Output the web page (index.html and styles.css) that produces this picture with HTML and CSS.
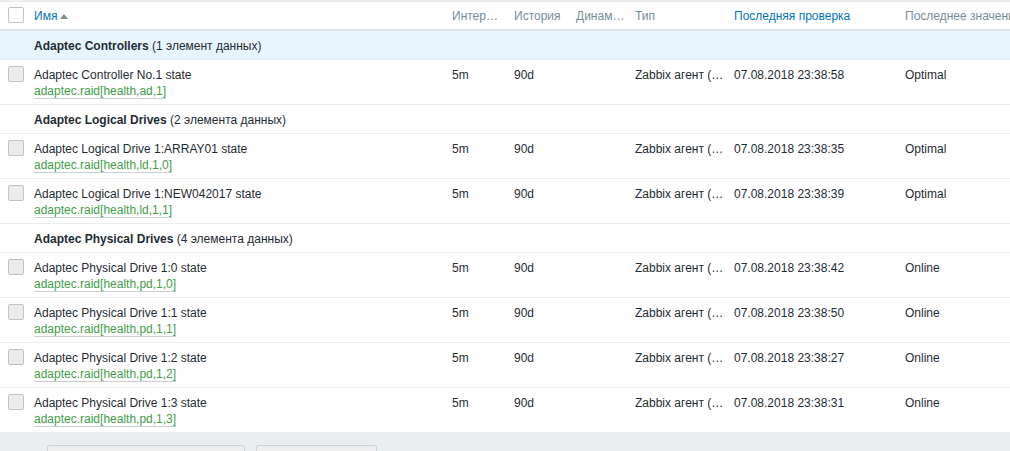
FILE: index.html
```html
<!DOCTYPE html>
<html lang="ru">
<head>
<meta charset="utf-8">
<link rel="stylesheet" href="styles.css">
</head>
<body>
<div class="page">
  <div class="topband"></div>
  <table class="list">
    <colgroup>
      <col class="c-chk"><col class="c-name"><col class="c-int"><col class="c-hist"><col class="c-dyn"><col class="c-type"><col class="c-check"><col class="c-val">
    </colgroup>
    <thead>
      <tr>
        <th class="chk"><span class="cb cb-head"></span></th>
        <th><a class="sort">Имя</a><span class="arrow"></span></th>
        <th>Интер…</th>
        <th>История</th>
        <th>Динам…</th>
        <th>Тип</th>
        <th><a class="sort">Последняя проверка</a></th>
        <th>Последнее значение</th>
      </tr>
    </thead>
    <tbody>
      <tr class="group"><td></td><td colspan="7"><b>Adaptec Controllers</b> (1 элемент данных)</td></tr>
      <tr class="item"><td class="chk"><span class="cb"></span></td><td><div>Adaptec Controller No.1 state</div><span class="key">adaptec.raid[health,ad,1]</span></td><td>5m</td><td>90d</td><td></td><td>Zabbix агент (…</td><td>07.08.2018 23:38:58</td><td>Optimal</td></tr>
      <tr class="group plain"><td></td><td colspan="7"><b>Adaptec Logical Drives</b> (2 элемента данных)</td></tr>
      <tr class="item"><td class="chk"><span class="cb"></span></td><td><div>Adaptec Logical Drive 1:ARRAY01 state</div><span class="key">adaptec.raid[health,ld,1,0]</span></td><td>5m</td><td>90d</td><td></td><td>Zabbix агент (…</td><td>07.08.2018 23:38:35</td><td>Optimal</td></tr>
      <tr class="item"><td class="chk"><span class="cb"></span></td><td><div>Adaptec Logical Drive 1:NEW042017 state</div><span class="key">adaptec.raid[health,ld,1,1]</span></td><td>5m</td><td>90d</td><td></td><td>Zabbix агент (…</td><td>07.08.2018 23:38:39</td><td>Optimal</td></tr>
      <tr class="group plain"><td></td><td colspan="7"><b>Adaptec Physical Drives</b> (4 элемента данных)</td></tr>
      <tr class="item"><td class="chk"><span class="cb"></span></td><td><div>Adaptec Physical Drive 1:0 state</div><span class="key">adaptec.raid[health,pd,1,0]</span></td><td>5m</td><td>90d</td><td></td><td>Zabbix агент (…</td><td>07.08.2018 23:38:42</td><td>Online</td></tr>
      <tr class="item"><td class="chk"><span class="cb"></span></td><td><div>Adaptec Physical Drive 1:1 state</div><span class="key">adaptec.raid[health,pd,1,1]</span></td><td>5m</td><td>90d</td><td></td><td>Zabbix агент (…</td><td>07.08.2018 23:38:50</td><td>Online</td></tr>
      <tr class="item"><td class="chk"><span class="cb"></span></td><td><div>Adaptec Physical Drive 1:2 state</div><span class="key">adaptec.raid[health,pd,1,2]</span></td><td>5m</td><td>90d</td><td></td><td>Zabbix агент (…</td><td>07.08.2018 23:38:27</td><td>Online</td></tr>
      <tr class="item"><td class="chk"><span class="cb"></span></td><td><div>Adaptec Physical Drive 1:3 state</div><span class="key">adaptec.raid[health,pd,1,3]</span></td><td>5m</td><td>90d</td><td></td><td>Zabbix агент (…</td><td>07.08.2018 23:38:31</td><td>Online</td></tr>
    </tbody>
  </table>
  <div class="footer">
    <span class="btn btn-wide"></span>
    <span class="btn btn-narrow"></span>
  </div>
</div>
</body>
</html>
```

FILE: styles.css
```css
html, body {
  margin: 0;
  padding: 0;
  background: #ffffff;
}
body {
  font-family: "Liberation Sans", Arial, sans-serif;
  font-size: 12px;
  color: #1f2c33;
  overflow: hidden;
}
.page {
  width: 1010px;
  overflow: hidden;
}
.topband {
  height: 2px;
  background: #ebeef0;
}
.list {
  border-collapse: collapse;
  table-layout: fixed;
  width: 1060px;
}
.c-chk { width: 29px; }
.c-name { width: 418px; }
.c-int { width: 62px; }
.c-hist { width: 62px; }
.c-dyn { width: 59px; }
.c-type { width: 99px; }
.c-check { width: 171px; }
.c-val { width: 160px; }

th, td {
  text-align: left;
  vertical-align: top;
  padding: 6px 5px;
  line-height: 14px;
  white-space: nowrap;
  overflow: hidden;
}
th {
  font-weight: normal;
  color: #768d99;
  height: 14px;
  padding-top: 7px;
  padding-bottom: 6px;
  border-bottom: 2px solid #dfe4e7;
}
th.chk, td.chk {
  padding-left: 8px;
  padding-right: 0;
}
.sort {
  color: #0275b8;
}
.arrow {
  display: inline-block;
  width: 0;
  height: 0;
  margin-left: 3px;
  border-left: 4px solid transparent;
  border-right: 4px solid transparent;
  border-bottom: 5px solid #768d99;
  vertical-align: 1px;
}
.cb {
  display: block;
  box-sizing: border-box;
  width: 16px;
  height: 16px;
  border: 1px solid #bfc5c7;
  border-radius: 2px;
  background: #ebebeb;
}
.cb-head {
  background: #ffffff;
  margin-top: -2px;
}
.group td {
  background: #e8f5ff;
  padding-top: 8px;
  padding-bottom: 6px;
  border-bottom: 1px solid #ebeef0;
}
.group.plain td {
  background: #ffffff;
}
.item td {
  height: 32px;
  border-bottom: 1px solid #ebeef0;
  padding-top: 8px;
  padding-bottom: 4px;
}
.item td.chk .cb {
  margin-top: -2px;
}
.item td div {
  line-height: 14px;
}
.key {
  display: inline-block;
  margin-top: 2px;
  color: #429e47;
  line-height: 14px;
  border-bottom: 1px solid #c8ced1;
}
.footer {
  background: #ebeef0;
  height: 20px;
  padding: 12px 0 0 47px;
  display: flex;
  gap: 11px;
}
.btn {
  display: block;
  box-sizing: border-box;
  height: 24px;
  border: 1px solid #cfd4d7;
  border-radius: 2px;
  background: #eeeeee;
}
.btn-wide { width: 198px; }
.btn-narrow { width: 121px; }
```
